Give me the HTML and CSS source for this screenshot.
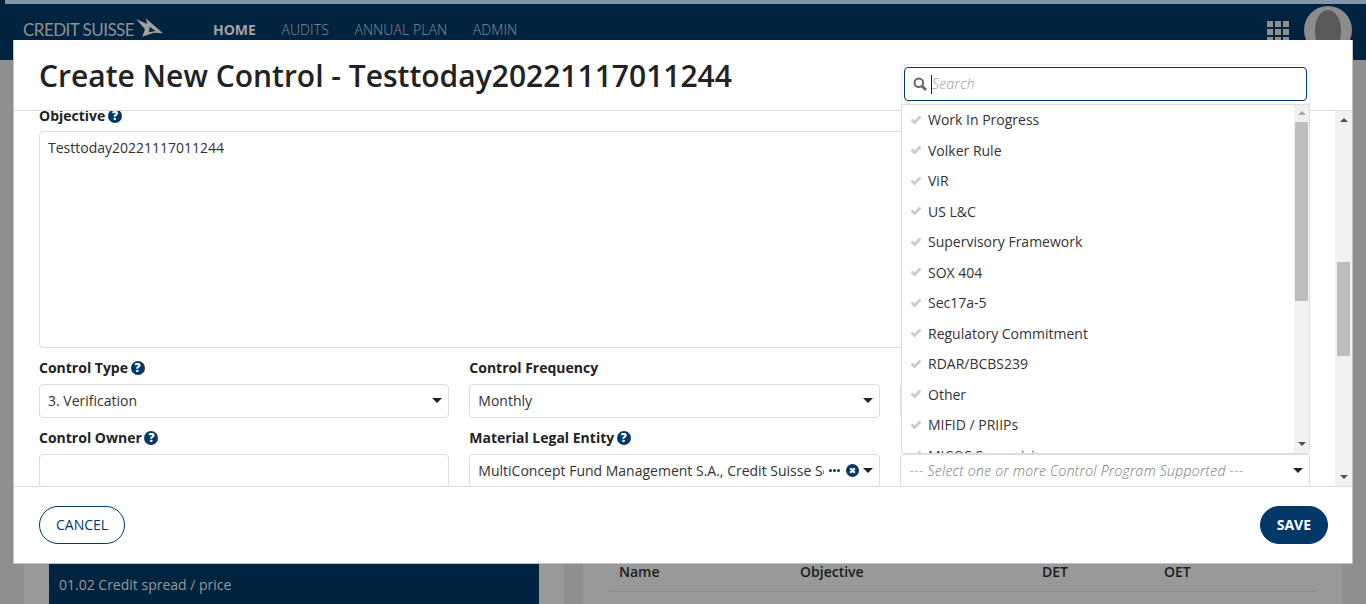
FILE: index.html
```html
<!DOCTYPE html>
<html lang="en">
<head>
    <meta charset="UTF-8">
    <meta name="viewport" content="width=device-width, initial-scale=1.0">
    <title>Create New Control</title>
    <link rel="stylesheet" href="styles.css">
</head>
<body>
    <!-- page behind the dialog, dimmed -->
    <div class="page">
        <div class="top-strip"></div>
        <header class="navbar">
            <div class="logo">
                <span class="logo-text">CREDIT SUISSE</span>
                <svg class="logo-sails" width="28" height="20" viewBox="0 0 28 20">
                    <path fill="#a0a0a0" fill-rule="evenodd" d="M0.3 1.3 L11.3 6 L9.7 0.3 L27 15.3 L18 14.7 L6.3 18.7 L9 11.3 Z M13.7 8.7 L19.7 13 L13 14.3 Z"/>
                </svg>
            </div>
            <nav class="nav">
                <a class="nav-link active">HOME</a>
                <a class="nav-link">AUDITS</a>
                <a class="nav-link">ANNUAL PLAN</a>
                <a class="nav-link">ADMIN</a>
            </nav>
            <div class="apps-grid">
                <i></i><i></i><i></i><i></i><i></i><i></i><i></i><i></i><i></i>
            </div>
            <div class="avatar"><div class="avatar-head"></div></div>
        </header>
        <div class="subbar"></div>
        <main class="content">
            <section class="card card-left">
                <div class="tree-row">01.02 Credit spread / price</div>
            </section>
            <section class="card card-right">
                <div class="table-head">
                    <span class="col-name">Name</span>
                    <span class="col-objective">Objective</span>
                    <span class="col-det">DET</span>
                    <span>OET</span>
                </div>
            </section>
        </main>
    </div>

    <div class="modal">
        <div class="modal-header">
            <h1>Create New Control - Testtoday20221117011244</h1>
        </div>

        <div class="modal-body">
            <form class="form">
                <div class="field">
                    <label>Objective <span class="help">?</span></label>
                    <div class="textarea">Testtoday20221117011244</div>
                </div>
                <div class="form-row">
                    <div class="field">
                        <label>Control Type <span class="help">?</span></label>
                        <div class="select"><span class="select-text">3. Verification</span><span class="caret"></span></div>
                    </div>
                    <div class="field">
                        <label>Control Frequency</label>
                        <div class="select"><span class="select-text">Monthly</span><span class="caret"></span></div>
                    </div>
                    <div class="field">
                        <label>&nbsp;</label>
                        <div class="select"></div>
                    </div>
                </div>
                <div class="form-row">
                    <div class="field">
                        <label>Control Owner <span class="help">?</span></label>
                        <div class="select"></div>
                    </div>
                    <div class="field">
                        <label>Material Legal Entity <span class="help">?</span></label>
                        <div class="select">
                            <span class="select-text">MultiConcept Fund Management S.A., Credit Suisse Securities</span>
                            <span class="dots"><i></i><i></i><i></i></span>
                            <svg class="clear-icon" width="13" height="13" viewBox="0 0 13 13">
                                <circle cx="6.5" cy="6.5" r="6.5" fill="#003868"/>
                                <path d="M4.2 4.2 L8.8 8.8 M8.8 4.2 L4.2 8.8" stroke="#fff" stroke-width="2.2"/>
                            </svg>
                            <span class="caret"></span>
                        </div>
                    </div>
                    <div class="field">
                        <label>&nbsp;</label>
                        <div class="select"><span class="select-text placeholder">--- Select one or more Control Program Supported ---</span><span class="caret"></span></div>
                    </div>
                </div>
            </form>
            <div class="scrollbar">
                <span class="arrow-up"></span>
                <div class="scroll-thumb"></div>
                <span class="arrow-down"></span>
            </div>
        </div>

        <div class="modal-footer">
            <button class="btn btn-outline" type="button">CANCEL</button>
            <button class="btn btn-primary" type="button">SAVE</button>
        </div>

        <!-- open multiselect, hangs over header and form -->
        <div class="dropdown">
            <div class="dropdown-search">
                <div class="search-box">
                    <svg class="search-icon" width="14" height="14" viewBox="0 0 14 14">
                        <circle cx="5.8" cy="5.8" r="4.3" fill="none" stroke="#666" stroke-width="2"/>
                        <path d="M9 9 L13 13" stroke="#666" stroke-width="2.6"/>
                    </svg>
                    <span class="search-caret"></span>
                    <span class="search-placeholder">Search</span>
                </div>
            </div>
            <div class="dropdown-list">
                <ul class="options">
                    <li><svg class="check" width="12" height="10" viewBox="0 0 12 10"><path d="M0.5 5.5 L2.5 3.5 L4.5 5.5 L9.5 0.5 L11.5 2.5 L4.5 9.5 Z" fill="#ccc"/></svg>Work In Progress</li>
                    <li><svg class="check" width="12" height="10" viewBox="0 0 12 10"><path d="M0.5 5.5 L2.5 3.5 L4.5 5.5 L9.5 0.5 L11.5 2.5 L4.5 9.5 Z" fill="#ccc"/></svg>Volker Rule</li>
                    <li><svg class="check" width="12" height="10" viewBox="0 0 12 10"><path d="M0.5 5.5 L2.5 3.5 L4.5 5.5 L9.5 0.5 L11.5 2.5 L4.5 9.5 Z" fill="#ccc"/></svg>ViR</li>
                    <li><svg class="check" width="12" height="10" viewBox="0 0 12 10"><path d="M0.5 5.5 L2.5 3.5 L4.5 5.5 L9.5 0.5 L11.5 2.5 L4.5 9.5 Z" fill="#ccc"/></svg>US L&amp;C</li>
                    <li><svg class="check" width="12" height="10" viewBox="0 0 12 10"><path d="M0.5 5.5 L2.5 3.5 L4.5 5.5 L9.5 0.5 L11.5 2.5 L4.5 9.5 Z" fill="#ccc"/></svg>Supervisory Framework</li>
                    <li><svg class="check" width="12" height="10" viewBox="0 0 12 10"><path d="M0.5 5.5 L2.5 3.5 L4.5 5.5 L9.5 0.5 L11.5 2.5 L4.5 9.5 Z" fill="#ccc"/></svg>SOX 404</li>
                    <li><svg class="check" width="12" height="10" viewBox="0 0 12 10"><path d="M0.5 5.5 L2.5 3.5 L4.5 5.5 L9.5 0.5 L11.5 2.5 L4.5 9.5 Z" fill="#ccc"/></svg>Sec17a-5</li>
                    <li><svg class="check" width="12" height="10" viewBox="0 0 12 10"><path d="M0.5 5.5 L2.5 3.5 L4.5 5.5 L9.5 0.5 L11.5 2.5 L4.5 9.5 Z" fill="#ccc"/></svg>Regulatory Commitment</li>
                    <li><svg class="check" width="12" height="10" viewBox="0 0 12 10"><path d="M0.5 5.5 L2.5 3.5 L4.5 5.5 L9.5 0.5 L11.5 2.5 L4.5 9.5 Z" fill="#ccc"/></svg>RDAR/BCBS239</li>
                    <li><svg class="check" width="12" height="10" viewBox="0 0 12 10"><path d="M0.5 5.5 L2.5 3.5 L4.5 5.5 L9.5 0.5 L11.5 2.5 L4.5 9.5 Z" fill="#ccc"/></svg>Other</li>
                    <li><svg class="check" width="12" height="10" viewBox="0 0 12 10"><path d="M0.5 5.5 L2.5 3.5 L4.5 5.5 L9.5 0.5 L11.5 2.5 L4.5 9.5 Z" fill="#ccc"/></svg>MIFID / PRIIPs</li>
                    <li><svg class="check" width="12" height="10" viewBox="0 0 12 10"><path d="M0.5 5.5 L2.5 3.5 L4.5 5.5 L9.5 0.5 L11.5 2.5 L4.5 9.5 Z" fill="#ccc"/></svg>MICOS Supervision</li>
                </ul>
                <div class="list-scrollbar">
                    <span class="arrow-up light"></span>
                    <div class="list-thumb"></div>
                    <span class="arrow-down"></span>
                </div>
            </div>
        </div>
    </div>
</body>
</html>
```

FILE: styles.css
```css
* {
    box-sizing: border-box;
}

html, body {
    height: 100%;
}

body {
    margin: 0;
    font-family: "Open Sans", sans-serif;
    font-size: 14px;
    color: #333;
    background-color: #8f8f8f;
    overflow: hidden;
}

/* Page behind the dialog */
.page {
    height: 604px;
    display: flex;
    flex-direction: column;
    overflow: hidden;
}

.top-strip {
    height: 4px;
    margin-left: 5px;
    background-color: #8296a9;
    box-shadow: -5px 0 0 #002340;
}

.navbar {
    height: 56px;
    display: flex;
    align-items: flex-start;
    background-color: #002340;
    padding: 0 14px 0 23px;
}

.logo {
    display: flex;
    align-items: flex-start;
    width: 190px;
    height: 40px;
}

.logo-text {
    font-family: "Lato", sans-serif;
    font-weight: 400;
    font-size: 17px;
    letter-spacing: -0.55px;
    color: #909090;
    margin-top: 16px;
    line-height: 20px;
    white-space: nowrap;
}

.logo-sails {
    margin: 14px 0 0 2px;
}

.nav {
    display: flex;
    gap: 25.5px;
    flex: 1;
    padding-top: 15px;
}

.nav-link {
    font-weight: 300;
    letter-spacing: 0.1px;
    color: #8c8c8c;
    line-height: 22px;
}

.nav-link.active {
    font-weight: 700;
    letter-spacing: 0;
    color: #a3a3a3;
}

.apps-grid {
    display: grid;
    grid-template-columns: repeat(3, 6px);
    grid-auto-rows: 6px;
    gap: 2px;
    margin: 17px 15px 0 0;
}

.apps-grid i {
    background-color: #8f8f8f;
}

.avatar {
    width: 48px;
    height: 48px;
    margin-top: 2px;
    border-radius: 50%;
    background-color: #8c8c8c;
    display: flex;
    justify-content: center;
    padding-top: 4px;
}

.avatar-head {
    width: 26px;
    height: 40px;
    border-radius: 50% 50% 45% 45%;
    background-color: #595959;
}

.subbar {
    height: 149px;
    background-color: #8f8f8f;
    box-shadow: 0 1px 2px rgba(0, 0, 0, 0.45);
}

.content {
    flex: 1;
    display: flex;
    gap: 19px;
    padding: 0 24px;
    background-color: #8f8f8f;
}

.card {
    background-color: #999;
}

.card-left {
    width: 540px;
    padding: 355px 25px 0;
}

.card-right {
    flex: 1;
    padding: 353px 25px 0 26px;
}

.tree-row {
    height: 40px;
    padding: 11px 10px;
    line-height: 20px;
    background-color: #002340;
    color: #999;
}

.table-head {
    display: flex;
    padding: 0 10px;
    height: 30px;
    line-height: 20px;
    font-weight: 600;
    color: #1c1c1c;
    border-bottom: 1px solid #8c8c8c;
}

.col-name { width: 181px; }
.col-objective { width: 242px; }
.col-det { width: 122px; }

/* Dialog */
.modal {
    position: fixed;
    left: 13px;
    top: 40px;
    width: 1340px;
    height: 524px;
    display: flex;
    flex-direction: column;
    background-color: #fff;
    border: 1px solid #c4c4c4;
    border-top: none;
}

.modal-header {
    height: 71px;
    padding: 17px 25px 0;
    border-bottom: 1px solid #ddd;
}

.modal-header h1 {
    margin: 0;
    font-size: 30px;
    line-height: 38px;
    font-weight: 600;
    color: #222;
}

.modal-body {
    flex: 1;
    display: flex;
    min-height: 0;
    overflow: hidden;
}

.form {
    flex: 1;
    min-width: 0;
    margin-top: -5px;
    padding: 0 25px;
}

.field {
    margin-bottom: 10px;
}

.field label {
    display: block;
    height: 20px;
    margin-bottom: 5px;
    line-height: 20px;
    font-weight: 700;
    color: #222;
}

.form-row {
    display: grid;
    grid-template-columns: repeat(3, minmax(0, 1fr));
    gap: 20px;
}

.form-row .field label {
    margin-bottom: 6px;
}

.help {
    display: inline-block;
    width: 14px;
    height: 14px;
    margin-left: -1px;
    border-radius: 50%;
    background-color: #003868;
    color: #fff;
    font-size: 12px;
    font-weight: 800;
    line-height: 14px;
    text-align: center;
    vertical-align: 1px;
}

.textarea {
    height: 217px;
    padding: 5px 8px;
    line-height: 22px;
    border: 1px solid #ddd;
    border-radius: 4px;
}

.select {
    display: flex;
    align-items: center;
    height: 34px;
    padding: 0 6px 2px 8px;
    border: 1px solid #ddd;
    border-radius: 4px;
    background-color: #fff;
}

.select-text {
    flex: 1;
    min-width: 0;
    overflow: hidden;
    white-space: nowrap;
}

.placeholder {
    font-weight: 300;
    font-style: italic;
    letter-spacing: 0.27px;
    color: #777;
    margin-left: 1px;
}

.caret {
    width: 0;
    height: 0;
    margin-left: auto;
    border-left: 5px solid transparent;
    border-right: 5px solid transparent;
    border-top: 5px solid #222;
}

.dots {
    display: flex;
    gap: 1px;
    margin: 0 6px 0 5px;
}

.dots i {
    width: 3px;
    height: 3px;
    border-radius: 50%;
    background-color: #003868;
}

.clear-icon {
    margin-right: 4px;
}

.scrollbar {
    width: 17px;
    display: flex;
    flex-direction: column;
    align-items: center;
    background-color: #f1f1f1;
}

.scroll-thumb {
    width: 13px;
    height: 94px;
    margin-top: 140px;
    background-color: #bdbdbd;
}

.arrow-up,
.arrow-down {
    width: 0;
    height: 0;
    border-left: 4px solid transparent;
    border-right: 4px solid transparent;
}

.arrow-up {
    margin-top: 7px;
    border-bottom: 4px solid #505050;
}

.arrow-up.light {
    margin-top: 6px;
    border-bottom-color: #a8a8a8;
}

.arrow-down {
    margin-top: auto;
    margin-bottom: 7px;
    border-top: 4px solid #505050;
}

.modal-footer {
    height: 77px;
    display: flex;
    justify-content: space-between;
    align-items: flex-start;
    padding: 19px 24px 0 25px;
    border-top: 1px solid #ddd;
}

.btn {
    height: 38px;
    padding: 0 16px 2px;
    border-radius: 19px;
    font-family: "Open Sans", sans-serif;
    font-size: 14px;
    cursor: pointer;
}

.btn-outline {
    background-color: #fff;
    border: 1px solid #003868;
    color: #003868;
}

.btn-primary {
    background-color: #003868;
    border: 1px solid #003868;
    color: #fff;
    font-weight: 700;
}

/* Open multiselect */
.dropdown {
    position: absolute;
    left: 887px;
    top: 24px;
    width: 409px;
    height: 390px;
    display: flex;
    flex-direction: column;
}

.dropdown-search {
    height: 40px;
    padding: 2px;
    background-color: #fff;
    border: 1px solid #eee;
    border-bottom: none;
    border-radius: 4px 4px 0 0;
}

.search-box {
    height: 34px;
    display: flex;
    align-items: center;
    padding-left: 8px;
    border: 1px solid #003868;
    border-radius: 4px;
}

.search-icon {
    flex: none;
}

.search-caret {
    width: 1px;
    height: 19px;
    margin-left: 4px;
    background-color: #222;
}

.search-placeholder {
    font-style: italic;
    font-weight: 300;
    letter-spacing: 0.3px;
    color: #999;
    padding-bottom: 1px;
}

.dropdown-list {
    flex: 1;
    min-height: 0;
    display: flex;
    background-color: #fff;
    border: 1px solid #ddd;
    border-radius: 0 0 4px 4px;
    overflow: hidden;
}

.options {
    flex: 1;
    margin: -0.5px 0 0;
    padding: 0;
    list-style: none;
}

.options li {
    display: flex;
    align-items: center;
    height: 30.5px;
    padding-left: 8px;
    white-space: nowrap;
}

.check {
    margin-right: 6px;
}

.list-scrollbar {
    width: 15px;
    display: flex;
    flex-direction: column;
    align-items: center;
    background-color: #f1f1f1;
}

.list-thumb {
    width: 13px;
    height: 179px;
    margin-top: 7px;
    background-color: #bdbdbd;
}
```
